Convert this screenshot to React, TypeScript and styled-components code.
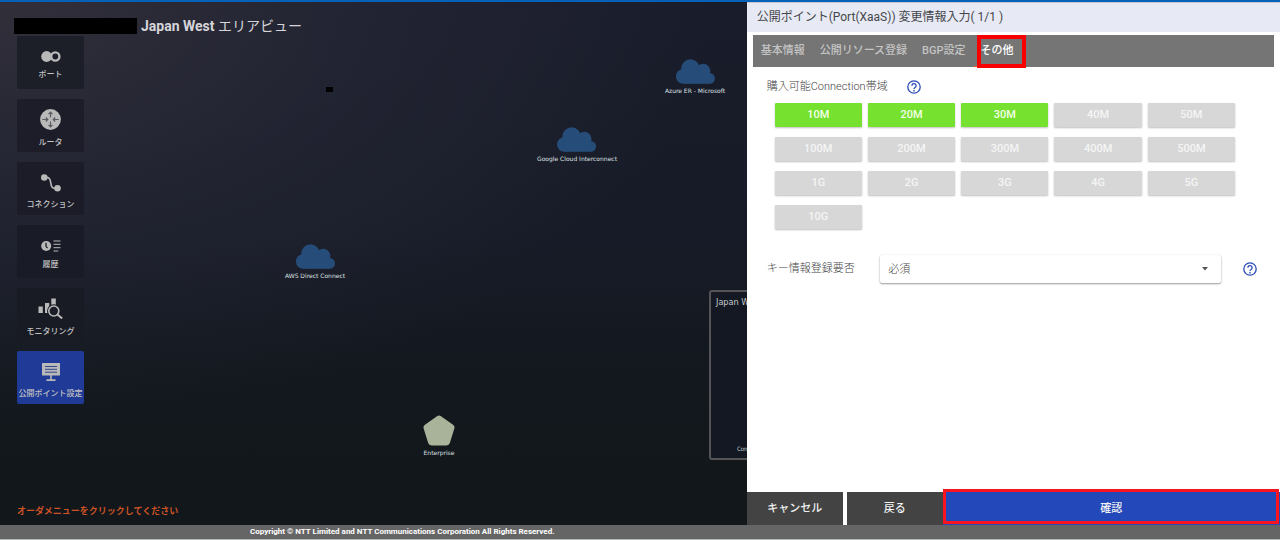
import React, { useState } from "react";
import styled, { createGlobalStyle } from "styled-components";

const GlobalStyle = createGlobalStyle`
  * { box-sizing: border-box; }
  body {
    margin: 0;
    background: #12171c;
    font-family: Roboto, "Noto Sans CJK JP", sans-serif;
  }
  button, select { font-family: inherit; margin: 0; }
`;

const Page = styled.div`
  min-height: 100vh;
  display: flex;
  flex-direction: column;
  border-top: 2px solid #0562b8;
`;

const Main = styled.main`
  flex: 1;
  display: grid;
  grid-template-columns: 7fr 5fr;
`;

const MapArea = styled.section`
  position: relative;
  overflow: hidden;
  display: flex;
  flex-direction: column;
  min-width: 0;
  background:
    radial-gradient(ellipse 95% 80% at 0% 0%, rgba(72, 66, 74, 0.5), rgba(52, 51, 68, 0.35) 50%, transparent 100%),
    linear-gradient(180deg, #191c2a 0%, #171b27 45%, #12181d 75%, #12171b 100%);
`;

const MapTitle = styled.h1`
  margin: 0;
  height: 34px;
  padding: 14px 14px 0;
  display: flex;
  align-items: center;
  gap: 4px;
  color: #d6d6da;
  font-size: 14px;
  line-height: 20px;
  font-weight: 400;
  white-space: nowrap;

  strong { font-weight: 700; }
`;

const Redacted = styled.span`
  width: 123px;
  height: 16px;
  background: #000;
`;

const Menu = styled.nav`
  display: flex;
  flex-direction: column;
  align-items: flex-start;
  gap: 10px;
  padding-left: 17px;
`;

const MenuButton = styled.button<{ $active?: boolean; $shade: string }>`
  width: 67px;
  height: 53px;
  padding: 7px 0 0;
  border: 0;
  border-radius: 2px;
  display: flex;
  flex-direction: column;
  align-items: center;
  justify-content: center;
  gap: 7px;
  background: ${(p) => (p.$active ? "#1f3a97" : p.$shade)};
  color: #c3c3c3;
  font-size: 8px;
  line-height: 12px;
  font-weight: 500;
  white-space: nowrap;

  svg { display: block; }
`;

const Message = styled.p`
  margin: auto 0 0;
  padding: 0 17px 6px;
  color: #cb5325;
  font-size: 9px;
  line-height: 16px;
  font-weight: 700;
`;

const Canvas = styled.div`
  position: absolute;
  inset: 0;
  pointer-events: none;
`;

const Node = styled.div<{ $x: number; $y: number }>`
  position: absolute;
  left: ${(p) => p.$x}px;
  top: ${(p) => p.$y}px;
  transform: translateX(-50%);
  display: flex;
  flex-direction: column;
  align-items: center;
  gap: 3px;
  color: #dfe1e4;
  font-family: "DejaVu Sans", sans-serif;
  font-size: 6px;
  line-height: 8px;
  white-space: nowrap;
`;

const Mark = styled.span<{ $x: number; $y: number }>`
  position: absolute;
  left: ${(p) => p.$x}px;
  top: ${(p) => p.$y}px;
  width: 7px;
  height: 5px;
  background: #000;
`;

const AreaBox = styled.div`
  position: absolute;
  left: 709px;
  top: 288px;
  width: 220px;
  height: 170px;
  padding: 5px;
  border: 2px solid #545456;
  border-radius: 3px;
  background: #131822;
  display: flex;
  flex-direction: column;
  justify-content: space-between;
  color: #c8cace;
  font-family: "DejaVu Sans Condensed", "DejaVu Sans", sans-serif;
  font-size: 9px;
  line-height: 10px;
`;

const AreaCaption = styled.span`
  padding-left: 21px;
  font-size: 6px;
  line-height: 8px;
`;

const Panel = styled.section`
  display: flex;
  flex-direction: column;
  min-width: 0;
  background: #fff;
`;

const PanelTitle = styled.h2`
  margin: 0;
  padding: 0 10px;
  border-top: 1px solid #c9c8cc;
  background: #e7eaf4;
  color: #45464b;
  font-size: 12px;
  line-height: 29px;
  font-weight: 400;
`;

const Tabs = styled.nav`
  display: flex;
  gap: 1px;
  margin: 3px 6px 0;
  padding-left: 1px;
  height: 32px;
  background: #757575;
`;

const Tab = styled.button<{ $active?: boolean }>`
  position: relative;
  padding: 0 7px;
  border: 0;
  border-bottom: 1px solid ${(p) => (p.$active ? "#ff5722" : "transparent")};
  background: none;
  color: ${(p) => (p.$active ? "#fff" : "#c4c4c4")};
  font-size: 11px;
  line-height: 16px;
  font-weight: 500;
  white-space: nowrap;

  &::after {
    content: "";
    display: ${(p) => (p.$active ? "block" : "none")};
    position: absolute;
    inset: 0 -5px -2px 3px;
    border: 4px solid #f80000;
  }
`;

const Form = styled.div`
  flex: 1;
  display: flex;
  flex-direction: column;
  padding: 12px 20px 0;
`;

const LabelRow = styled.div`
  display: flex;
  align-items: center;
  gap: 19px;
  height: 16px;
`;

const FieldLabel = styled.label`
  color: #444;
  font-size: 11px;
  line-height: 16px;
  font-weight: 300;
  white-space: nowrap;
`;

const HelpButton = styled.button`
  width: 14px;
  height: 14px;
  padding: 0;
  border: 0;
  background: none;

  svg { display: block; }
`;

const SpeedGrid = styled.div`
  display: grid;
  grid-template-columns: repeat(5, 1fr);
  gap: 10px 6px;
  margin: 8px 25px 0 8px;
`;

const SpeedButton = styled.button<{ $on: boolean }>`
  height: 24px;
  padding: 0;
  border: 0;
  border-radius: 1px;
  background: ${(p) => (p.$on ? "#76e22f" : "#d7d7d7")};
  box-shadow: 0 1px 2px rgba(0, 0, 0, 0.25);
  color: ${(p) => (p.$on ? "#f4ffe9" : "#f5f5f5")};
  font-size: 11px;
  line-height: 22px;
  font-weight: 500;
`;

const KeyRow = styled.div`
  display: grid;
  grid-template-columns: 1fr 3fr 36px;
  align-items: center;
  margin: 26px 0 0;
  padding-right: 3px;

  ${HelpButton} { justify-self: end; }
`;

const SelectBox = styled.div`
  position: relative;

  svg {
    position: absolute;
    right: 12px;
    top: 12px;
    pointer-events: none;
  }
`;

const Select = styled.select`
  appearance: none;
  display: block;
  width: 100%;
  height: 28px;
  padding: 0 28px 0 8px;
  border: 0;
  border-radius: 2px;
  background: #fff;
  box-shadow: 0 1px 2px rgba(0, 0, 0, 0.4), 0 0 1px rgba(0, 0, 0, 0.12);
  color: #444;
  font-size: 11px;
  font-weight: 300;
`;

const Actions = styled.div`
  display: flex;
  height: 33px;
`;

const ActionButton = styled.button<{ $primary?: boolean }>`
  position: relative;
  flex: ${(p) => (p.$primary ? "1" : "0 0 96px")};
  padding: 0;
  border: 0;
  background: ${(p) => (p.$primary ? "#2348b9" : "#434343")};
  color: #f2f2f2;
  font-size: 11px;
  line-height: 16px;
  font-weight: 500;

  & + &:not(:last-child) { margin-left: 4px; }

  &::after {
    content: "";
    display: ${(p) => (p.$primary ? "block" : "none")};
    position: absolute;
    inset: -3px 1px 1px 0;
    border: 3px solid #fa1420;
  }
`;

const Footer = styled.footer`
  height: 15px;
  padding-left: 250px;
  border-bottom: 1px solid #b4bcba;
  background: #656565;
  color: #fff;
  font-size: 8px;
  line-height: 14px;
  font-weight: 700;
  white-space: nowrap;
`;

const ICON = "#b9b9b9";

const PortIcon = () => (
  <svg width="20" height="11" viewBox="0 0 20 11">
    <circle cx="5.6" cy="5.5" r="5.4" fill={ICON} />
    <circle cx="14.3" cy="5.5" r="4.1" fill="#1c1e29" stroke={ICON} strokeWidth="2.4" />
  </svg>
);

const RouterIcon = () => (
  <svg width="21" height="21" viewBox="0 0 21 21">
    <circle cx="10.5" cy="10.5" r="10.4" fill={ICON} />
    <g fill="none" stroke="#5b5c62" strokeWidth="1.2">
      <path d="M10.5 8.4V3.2M8.5 5.2l2-2 2 2" />
      <path d="M10.5 12.6v5.2M8.5 15.8l2 2 2-2" />
      <path d="M2.3 10.5h5.4M5.8 8.5l2 2-2 2" />
      <path d="M18.7 10.5h-5.4M15.2 8.5l-2 2 2 2" />
    </g>
  </svg>
);

const ConnectionIcon = () => (
  <svg width="20" height="18" viewBox="0 0 20 18">
    <path d="M3.3 3.5h3.2c5 0 1.5 10.7 6.6 10.7h3.5" fill="none" stroke={ICON} strokeWidth="1.6" />
    <circle cx="3.3" cy="3.5" r="3.3" fill={ICON} />
    <circle cx="16.5" cy="14.3" r="3.3" fill={ICON} />
  </svg>
);

const HistoryIcon = () => (
  <svg width="20" height="12" viewBox="0 0 20 12">
    <circle cx="5.2" cy="6" r="5" fill={ICON} />
    <path d="M5 2.7v3.6l1.5 1.9" fill="none" stroke="#1b1d28" strokeWidth="1.3" />
    <path d="M12.5 1h7M12.5 4.3h7M12.5 7.7h7M12.5 11h4.7" stroke={ICON} strokeWidth="1" />
  </svg>
);

const MonitorIcon = () => (
  <svg width="25" height="21" viewBox="0 0 25 21">
    <path d="M.5 8.5h4.3v6.5H.5zM7 5h4.3v10H7zM13.3.5h4.5v8h-4.5z" fill={ICON} />
    <circle cx="15.8" cy="13" r="5" fill="#1a1d27" stroke="#1a1d27" strokeWidth="3.6" />
    <circle cx="15.8" cy="13" r="5" fill="none" stroke={ICON} strokeWidth="1.6" />
    <path d="M19.5 16.5l4.7 4" stroke={ICON} strokeWidth="2" />
  </svg>
);

const BoardIcon = () => (
  <svg width="18" height="18" viewBox="0 0 18 18">
    <path d="M0 0h18v12.5H0zM8.2 12h1.6v4.5H8.2zM4.5 16.2h9V18h-9z" fill={ICON} />
    <path d="M3 3.5h12M3 6.3h12M3 9.2h12" stroke="#32478c" strokeWidth="1" />
  </svg>
);

const Cloud = () => (
  <svg width="39" height="25" viewBox="0 0 38 24" fill="#264d79">
    <circle cx="7.2" cy="16.8" r="7.2" />
    <circle cx="14.2" cy="9" r="9" />
    <circle cx="26.6" cy="11.5" r="7" />
    <circle cx="32.7" cy="18.7" r="5.3" />
    <path d="M7.2 12h25.5v12H7.2z" />
  </svg>
);

const Pentagon = () => (
  <svg width="32" height="31" viewBox="0 0 32 31">
    <path
      d="M16 4L28 12.500 23.500 27h-15L4 12.500z"
      fill="#a9b399"
      stroke="#a9b399"
      strokeWidth="7"
      strokeLinejoin="round"
    />
  </svg>
);

const Help = ({ label }: { label: string }) => (
  <HelpButton type="button" aria-label={label}>
    <svg width="14" height="14" viewBox="0 0 14 14" fill="none" stroke="#2b4cb8">
      <circle cx="7" cy="7" r="6.2" strokeWidth="1.3" />
      <path d="M4.9 5.7a2.1 2.1 0 1 1 3.4 1.6C7.5 7.9 7 8.2 7 9.1" strokeWidth="1.3" />
      <path d="M7 10v1.4" strokeWidth="1.4" />
    </svg>
  </HelpButton>
);

const menuItems = [
  { label: "ポート", Icon: PortIcon, shade: "#1c1e28" },
  { label: "ルータ", Icon: RouterIcon, shade: "#1c1d28" },
  { label: "コネクション", Icon: ConnectionIcon, shade: "#1b1c28" },
  { label: "履歴", Icon: HistoryIcon, shade: "#191c26" },
  { label: "モニタリング", Icon: MonitorIcon, shade: "#181b24" },
  { label: "公開ポイント設定", Icon: BoardIcon, shade: "#181b24", active: true },
];

const clouds = [
  { label: "Azure ER - Microsoft", x: 695, y: 57 },
  { label: "Google Cloud Interconnect", x: 577, y: 125 },
  { label: "AWS Direct Connect", x: 315, y: 242 },
];

const tabs = ["基本情報", "公開リソース登録", "BGP設定", "その他"];

const speeds = [
  "10M", "20M", "30M", "40M", "50M",
  "100M", "200M", "300M", "400M", "500M",
  "1G", "2G", "3G", "4G", "5G", "10G",
];

export default function App() {
  const [selected, setSelected] = useState(["10M", "20M", "30M"]);
  const [tab, setTab] = useState("その他");

  const toggle = (speed: string) =>
    setSelected((list) =>
      list.includes(speed) ? list.filter((s) => s !== speed) : [...list, speed]
    );

  return (
    <Page>
      <GlobalStyle />
      <Main>
        <MapArea>
          <Canvas>
            {clouds.map((c) => (
              <Node key={c.label} $x={c.x} $y={c.y}>
                <Cloud />
                {c.label}
              </Node>
            ))}
            <Node $x={439} $y={413}>
              <Pentagon />
              Enterprise
            </Node>
            <Mark $x={326} $y={85} />
            <AreaBox>
              <span>Japan West</span>
              <AreaCaption>Connection</AreaCaption>
            </AreaBox>
          </Canvas>
          <MapTitle>
            <Redacted />
            <span>
              <strong>Japan West</strong> エリアビュー
            </span>
          </MapTitle>
          <Menu>
            {menuItems.map(({ label, Icon, shade, active }) => (
              <MenuButton key={label} type="button" $shade={shade} $active={active}>
                <Icon />
                {label}
              </MenuButton>
            ))}
          </Menu>
          <Message>オーダメニューをクリックしてください</Message>
        </MapArea>

        <Panel>
          <PanelTitle>公開ポイント(Port(XaaS)) 変更情報入力( 1/1 )</PanelTitle>
          <Tabs>
            {tabs.map((t) => (
              <Tab key={t} type="button" $active={t === tab} onClick={() => setTab(t)}>
                {t}
              </Tab>
            ))}
          </Tabs>
          <Form>
            <LabelRow>
              <FieldLabel as="span" id="speed-label">購入可能Connection帯域</FieldLabel>
              <Help label="帯域のヘルプ" />
            </LabelRow>
            <SpeedGrid role="group" aria-labelledby="speed-label">
              {speeds.map((s) => (
                <SpeedButton
                  key={s}
                  type="button"
                  $on={selected.includes(s)}
                  aria-pressed={selected.includes(s)}
                  onClick={() => toggle(s)}
                >
                  {s}
                </SpeedButton>
              ))}
            </SpeedGrid>
            <KeyRow>
              <FieldLabel htmlFor="key-required">キー情報登録要否</FieldLabel>
              <SelectBox>
                <Select id="key-required" defaultValue="必須">
                  <option>必須</option>
                </Select>
                <svg width="8" height="4" viewBox="0 0 8 4">
                  <path d="M1 0h6L4 3.5z" fill="#555" />
                </svg>
              </SelectBox>
              <Help label="キー情報のヘルプ" />
            </KeyRow>
          </Form>
          <Actions>
            <ActionButton type="button">キャンセル</ActionButton>
            <ActionButton type="button">戻る</ActionButton>
            <ActionButton type="button" $primary>確認</ActionButton>
          </Actions>
        </Panel>
      </Main>
      <Footer>Copyright © NTT Limited and NTT Communications Corporation All Rights Reserved.</Footer>
    </Page>
  );
}
